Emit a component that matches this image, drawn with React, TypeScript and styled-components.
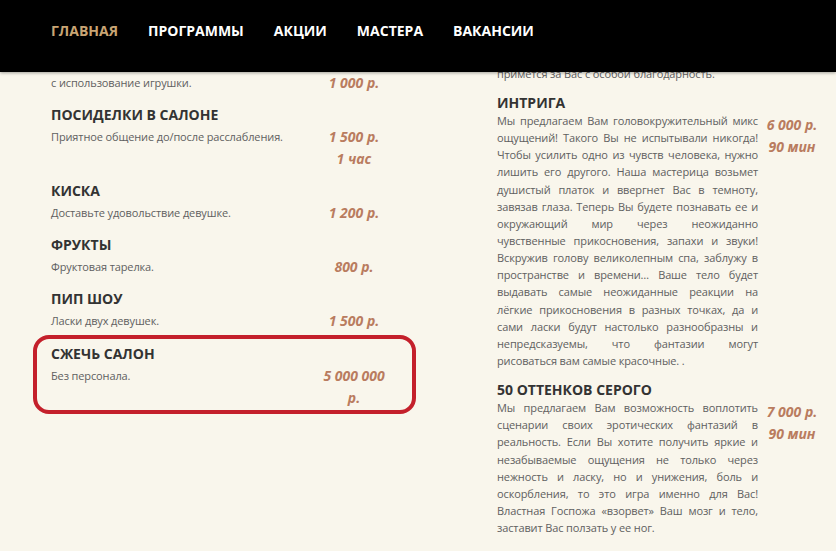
import React from 'react';
import styled, { createGlobalStyle } from 'styled-components';

const GlobalStyle = createGlobalStyle`
  html, body {
    margin: 0;
    padding: 0;
    background: #f9f6ec;
    font-family: "Open Sans", "Liberation Sans", sans-serif;
  }
`;

const Page = styled.div`
  width: 836px;
  height: 551px;
  overflow: hidden;
  background: #f9f6ec;
`;

const Header = styled.header`
  position: relative;
  z-index: 2;
  height: 72px;
  background: #000;
  box-shadow: 0 1px 3px rgba(0, 0, 0, 0.35);
`;

const Nav = styled.nav`
  display: flex;
  gap: 30px;
  padding: 21px 0 0 51px;
`;

const NavLink = styled.a<{ active?: boolean }>`
  font-size: 14px;
  line-height: 20px;
  font-weight: 700;
  text-transform: uppercase;
  text-decoration: none;
  color: ${({ active }) => (active ? '#c9a574' : '#fff')};
  cursor: pointer;
`;

const Main = styled.main`
  display: flex;
  padding-left: 51px;
`;

const LeftCol = styled.div`
  width: 339px;
`;

const RightCol = styled.div`
  width: 325px;
  margin-left: 107px;
  margin-top: -7px;
`;

const Item = styled.div<{ last?: boolean }>`
  margin-bottom: ${({ last }) => (last ? '0' : '10px')};
`;

const Title = styled.h3`
  margin: 0;
  font-size: 14px;
  line-height: 22px;
  font-weight: 700;
  color: #333;
  text-transform: uppercase;
`;

const Row = styled.div<{ wide?: boolean }>`
  display: grid;
  grid-template-columns: ${({ wide }) => (wide ? '261px 60px' : '1fr 72px')};
  column-gap: ${({ wide }) => (wide ? '4px' : '0')};
  align-items: start;
`;

const Desc = styled.p<{ shift?: number }>`
  margin: ${({ shift = 0 }) => `${shift}px 0 0 0`};
  font-size: 11px;
  line-height: 17.14px;
  letter-spacing: -0.12px;
  color: #606060;
`;

const Line = styled.span<{ last?: boolean }>`
  display: block;
  white-space: nowrap;
  text-align: ${({ last }) => (last ? 'left' : 'justify')};
  text-align-last: ${({ last }) => (last ? 'left' : 'justify')};
`;

const Price = styled.div`
  text-align: center;
  font-size: 14px;
  line-height: 22px;
  font-weight: 700;
  font-style: italic;
  color: #b97c5f;
`;

const Highlight = styled.div`
  margin: -7px -26px 0 -18px;
  padding: 4px 22px 1px 14px;
  border: 4px solid #c4202b;
  border-radius: 16px;
`;

const Partial = styled.p`
  margin: 0 0 10px 0;
  font-size: 11px;
  line-height: 17px;
  letter-spacing: -0.12px;
  color: #606060;
`;

type Service = { title: string; desc: string; price: string[] };

const leftItems: Service[] = [
  { title: 'Посиделки в салоне', desc: 'Приятное общение до/после расслабления.', price: ['1 500 р.', '1 час'] },
  { title: 'Киска', desc: 'Доставьте удовольствие девушке.', price: ['1 200 р.'] },
  { title: 'Фрукты', desc: 'Фруктовая тарелка.', price: ['800 р.'] },
  { title: 'Пип шоу', desc: 'Ласки двух девушек.', price: ['1 500 р.'] },
];

const intrigaLines = [
  'Мы предлагаем Вам головокружительный микс',
  'ощущений! Такого Вы не испытывали никогда!',
  'Чтобы усилить одно из чувств человека, нужно',
  'лишить его другого. Наша мастерица возьмет',
  'душистый платок и ввергнет Вас в темноту,',
  'завязав глаза. Теперь Вы будете познавать ее и',
  'окружающий мир через неожиданно',
  'чувственные прикосновения, запахи и звуки!',
  'Вскружив голову великолепным спа, заблужу в',
  'пространстве и времени… Ваше тело будет',
  'выдавать самые неожиданные реакции на',
  'лёгкие прикосновения в разных точках, да и',
  'сами ласки будут настолько разнообразны и',
  'непредсказуемы, что фантазии могут',
  'рисоваться вам самые красочные. .',
];

const shadesLines = [
  'Мы предлагаем Вам возможность воплотить',
  'сценарии своих эротических фантазий в',
  'реальность. Если Вы хотите получить яркие и',
  'незабываемые ощущения не только через',
  'нежность и ласку, но и унижения, боль и',
  'оскорбления, то это игра именно для Вас!',
  'Властная Госпожа «взорвет» Ваш мозг и тело,',
  'заставит Вас ползать у ее ног.',
];

function Prices({ list }: { list: string[] }) {
  return (
    <div>
      {list.map((p) => (
        <Price key={p}>{p}</Price>
      ))}
    </div>
  );
}

function Justified({ lines }: { lines: string[] }) {
  return (
    <Desc shift={-2}>
      {lines.map((l, i) => (
        <Line key={i} last={i === lines.length - 1}>
          {l}
        </Line>
      ))}
    </Desc>
  );
}

export default function App() {
  return (
    <Page>
      <GlobalStyle />
      <Header>
        <Nav>
          <NavLink active>Главная</NavLink>
          <NavLink>Программы</NavLink>
          <NavLink>Акции</NavLink>
          <NavLink>Мастера</NavLink>
          <NavLink>Вакансии</NavLink>
        </Nav>
      </Header>
      <Main>
        <LeftCol>
          <Item>
            <Row>
              <Desc shift={2}>с использование игрушки.</Desc>
              <Prices list={['1 000 р.']} />
            </Row>
          </Item>
          {leftItems.map((it) => (
            <Item key={it.title}>
              <Title>{it.title}</Title>
              <Row>
                <Desc shift={2}>{it.desc}</Desc>
                <Prices list={it.price} />
              </Row>
            </Item>
          ))}
          <Highlight>
            <Item last>
              <Title>Сжечь салон</Title>
              <Row>
                <Desc shift={2}>Без персонала.</Desc>
                <Prices list={['5 000 000 р.']} />
              </Row>
            </Item>
          </Highlight>
        </LeftCol>
        <RightCol>
          <Partial>примется за Вас с особой благодарность.</Partial>
          <Item>
            <Title>Интрига</Title>
            <Row wide>
              <Justified lines={intrigaLines} />
              <Prices list={['6 000 р.', '90 мин']} />
            </Row>
          </Item>
          <Item>
            <Title>50 оттенков серого</Title>
            <Row wide>
              <Justified lines={shadesLines} />
              <Prices list={['7 000 р.', '90 мин']} />
            </Row>
          </Item>
        </RightCol>
      </Main>
    </Page>
  );
}
